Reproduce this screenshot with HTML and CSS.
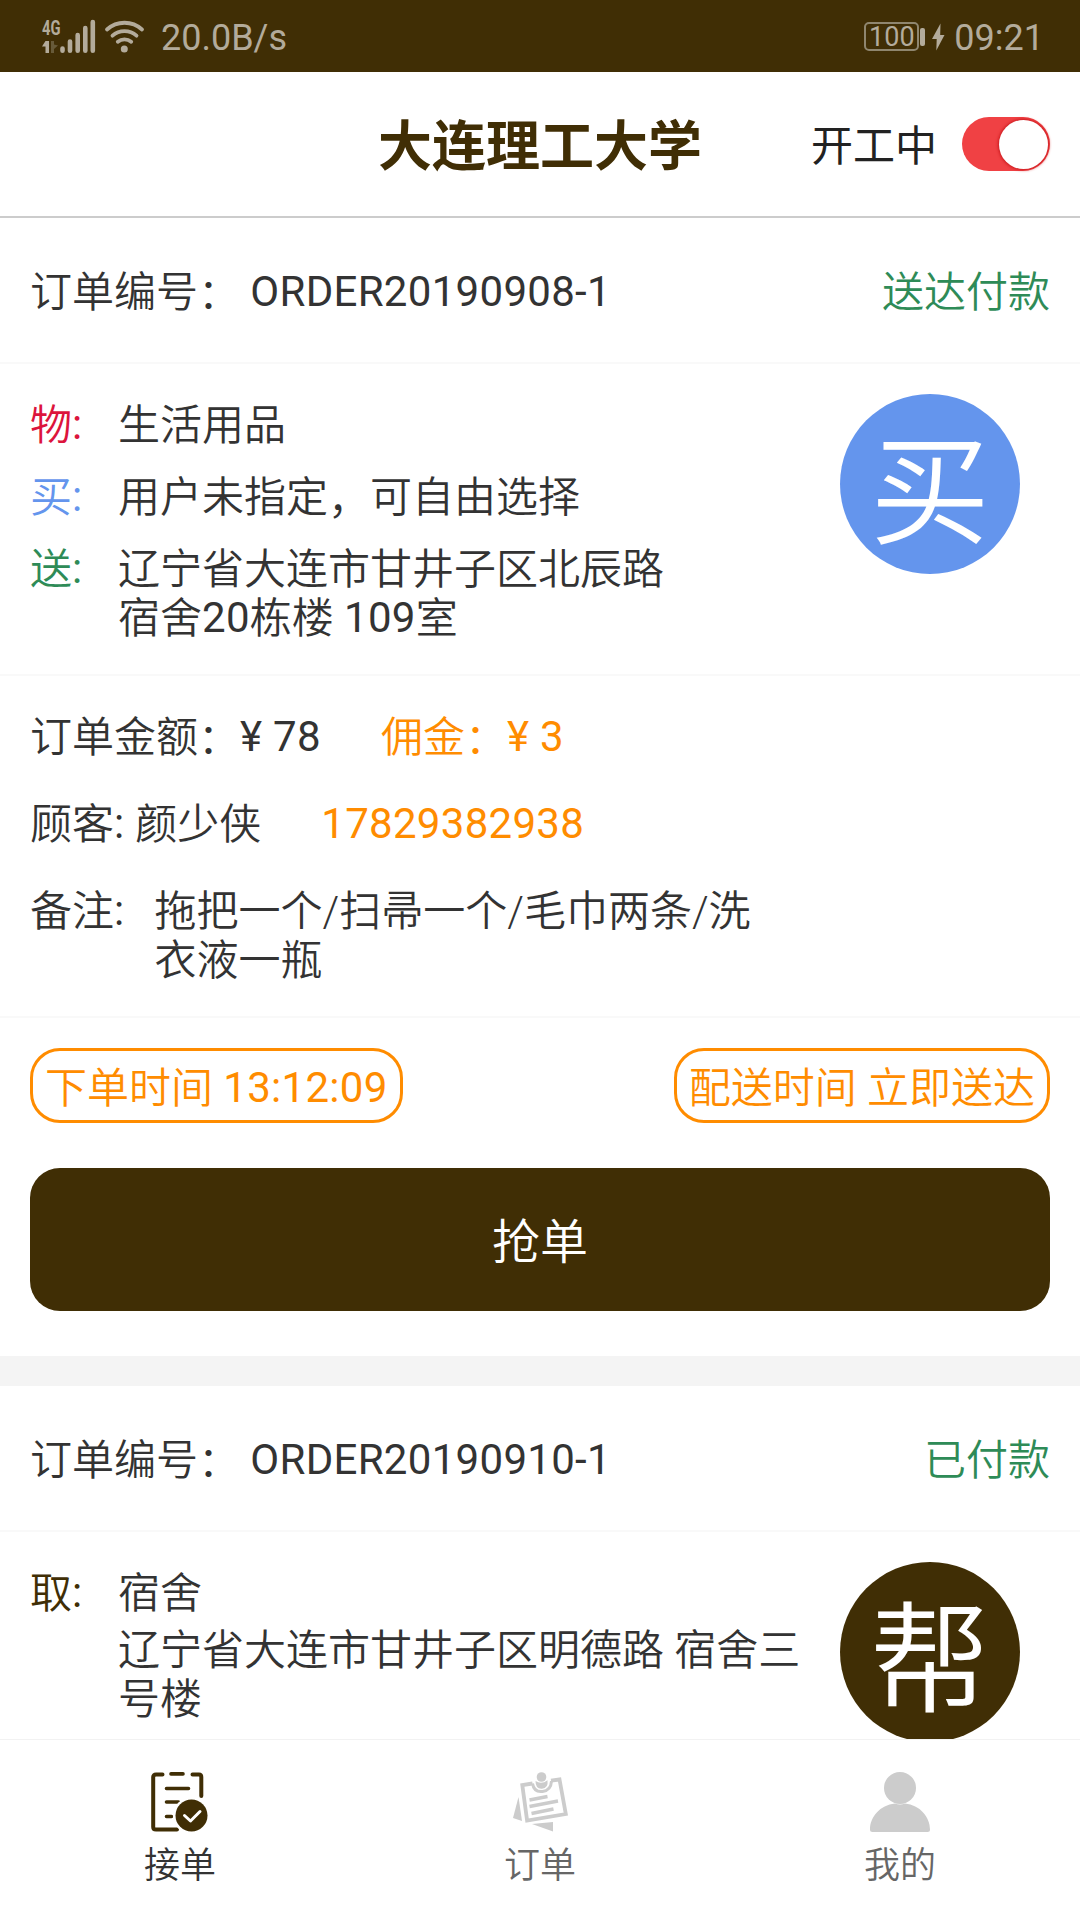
FILE: index.html
```html
<!DOCTYPE html>
<html lang="zh-CN">
<head>
<meta charset="utf-8">
<title>大连理工大学</title>
<link rel="stylesheet" href="styles.css">
</head>
<body>
<div class="app">
  <div class="status-bar">
    <svg class="signal" width="115" height="52" viewBox="-2 -6 115 52" fill="#b3ab9b" stroke="none">
      <text class="net-type" x="0" y="16.500" textLength="18.500" lengthAdjust="spacingAndGlyphs">4G</text>
      <path d="M3.500 23h3.500v12H3.500v-6.500H0z"/>
      <path opacity=".35" d="M9 23v12h3v-4l4-3.500-4-1v-3.500z"/>
      <g stroke="#b3ab9b" stroke-width="4.600" stroke-linecap="round" fill="none">
        <path d="M20.500 30.500v2.200M28 23.500v9.200M35.700 17v15.700M43.300 10v22.700M50.800 4v28.700"/>
      </g>
      <g stroke="#b3ab9b" stroke-width="3.800" stroke-linecap="round" fill="none">
        <path d="M65 11.500a26 26 0 0 1 35 0M70.500 17.700a18 18 0 0 1 24 0M75.800 23.800a10.500 10.500 0 0 1 13.400 0"/>
      </g>
      <circle cx="82.300" cy="31" r="3.500"/>
    </svg>
    <span class="speed">20.0B/s</span>
    <span class="battery">100</span>
    <svg class="charge" width="26" height="30" viewBox="0 0 26 30" fill="#b3ab9b">
      <rect x="1" y="6" width="5" height="18" rx="2"/>
      <path d="M21.500 1.500L13 17h4.700L17.300 28.500 25.500 13h-4.300z"/>
    </svg>
    <span class="clock">09:21</span>
  </div>

  <header class="header">
    <h1 class="title">大连理工大学</h1>
    <div class="work">
      <span class="work-label">开工中</span>
      <span class="switch"><span class="knob"></span></span>
    </div>
  </header>

  <main class="orders">
    <section class="card">
      <div class="card-head">
        <span>订单编号<span class="colon">：</span> <span class="latin">ORDER20190908-1</span></span>
        <span class="paid">送达付款</span>
      </div>
      <div class="goods">
        <div class="places">
          <div class="place"><span class="tag red">物<span class="latin">:</span></span><div class="where">生活用品</div></div>
          <div class="place"><span class="tag blue">买<span class="latin">:</span></span><div class="where">用户未指定<span class="colon">，</span>可自由选择</div></div>
          <div class="place"><span class="tag green">送<span class="latin">:</span></span><div class="where">辽宁省大连市甘井子区北辰路<br>宿舍<span class="latin">20</span>栋楼 <span class="latin">109</span>室</div></div>
        </div>
        <div class="kind buy">买</div>
      </div>
      <div class="detail">
        <div class="line"><span>订单金额<span class="colon">：</span><span class="latin">¥ 78</span></span><span class="orange">佣金<span class="colon">：</span><span class="latin">¥ 3</span></span></div>
        <div class="line"><span>顾客<span class="latin">: </span>颜少侠</span><span class="orange latin phone">17829382938</span></div>
        <div class="line note"><span>备注<span class="latin">:</span></span><span class="note-text">拖把一个/扫帚一个/毛巾两条/洗衣液一瓶</span></div>
      </div>
      <div class="actions">
        <div class="times">
          <span class="pill">下单时间 <span class="latin">13:12:09</span></span>
          <span class="pill">配送时间 立即送达</span>
        </div>
        <button class="grab">抢单</button>
      </div>
    </section>

    <section class="card">
      <div class="card-head">
        <span>订单编号<span class="colon">：</span> <span class="latin">ORDER20190910-1</span></span>
        <span class="paid">已付款</span>
      </div>
      <div class="goods">
        <div class="places">
          <div class="place"><span class="tag brown">取<span class="latin">:</span></span><div class="where"><div class="name">宿舍</div>辽宁省大连市甘井子区明德路 宿舍三号楼</div></div>
        </div>
        <div class="kind help">帮</div>
      </div>
    </section>
  </main>

  <nav class="tabs">
    <a class="tab active">
      <svg width="60" height="60" viewBox="0 0 60 60" fill="none" stroke="#402e05" stroke-width="4" stroke-linecap="round" stroke-linejoin="round">
        <path d="M12.500 2.500H6Q3.200 2.500 3.200 5V55Q3.200 57.500 6 57.500H27"/>
        <path d="M42.500 2.500H49Q51.300 2.500 51.300 5V24"/>
        <path d="M21 1.900h12M16.500 16.500h22M16.500 30h12M16.500 44.500h5" stroke-width="3.600"/>
        <circle cx="41.500" cy="43.500" r="18.500" fill="#fff" stroke="none"/>
        <circle cx="41.500" cy="43.500" r="16" fill="#402e05" stroke="none"/>
        <path d="M34.500 43.500l6 5.500 9.500-9.500" stroke="#fff" stroke-width="3"/>
      </svg>
      <span>接单</span>
    </a>
    <a class="tab">
      <svg width="60" height="60" viewBox="0 0 60 60" fill="#ccc">
        <path d="M8.500 25L3 46l9 3z"/>
        <path d="M22 52l21-2V59.500z"/>
        <g fill="none" stroke="#ccc">
          <path d="M22.500 11.500L12.300 13l4.800 35.500 38.700-6.500-6.300-34.500-8.500 1.200" stroke-width="3.800"/>
          <path d="M22.500 11.500q1.500 9 10 8t9-10.500" stroke-width="3"/>
          <path d="M19.500 28l18-3.500M19.500 34.500l28.500-5.500M21.500 41.500l22-4.500" stroke-width="3.400"/>
        </g>
        <circle cx="31.500" cy="5" r="4.800"/>
        <path d="M25.500 9q6 4 12-.8 1 8-5.500 8.500t-6.500-7.700z"/>
      </svg>
      <span>订单</span>
    </a>
    <a class="tab">
      <svg width="60" height="60" viewBox="0 0 60 60" fill="#ccc">
        <circle cx="30" cy="16" r="16"/>
        <path d="M25 31.500Q30 33.500 35 31.500C50 33 60 45 60 57.500Q60 60 57.500 60H2.500Q0 60 0 57.500C0 45 10 33 25 31.500z"/>
      </svg>
      <span>我的</span>
    </a>
  </nav>
</div>
</body>
</html>
```
FILE: styles.css
```css
* { box-sizing: border-box; }

body {
  margin: 0;
  background: #fff;
  color: #333;
  font: 350 42px/49px Roboto, "Noto Sans CJK SC", sans-serif;
}

.latin {
  font-weight: 400;
  line-height: 40px;
  letter-spacing: 0.3px;
  vertical-align: 1px;
}
.phone { line-height: 47px; }
.colon {
  line-height: 40px;
  vertical-align: -2px;
}

.app {
  display: flex;
  flex-direction: column;
  width: 1080px;
  height: 1920px;
  overflow: hidden;
}

.status-bar {
  flex: none;
  display: flex;
  align-items: center;
  height: 72px;
  padding: 5px 36px 0 40px;
  background: #402e05;
  color: #b3ab9b;
  font-size: 36px;
  font-weight: 400;
}
.signal { margin-top: -2px; }
.net-type { font: 700 21px Roboto, sans-serif; }
.speed { margin-left: 6px; }
.battery {
  margin: -4px 0 0 auto;
  width: 55px;
  height: 29px;
  border: 2px solid #8f866f;
  border-radius: 5px;
  font-size: 27px;
  line-height: 26px;
  text-align: center;
}
.charge { margin: -4px 9px 0 0; }

.header {
  flex: none;
  display: grid;
  grid-template-columns: 1fr auto 1fr;
  align-items: center;
  height: 146px;
  padding: 0 30px;
  border-bottom: 2px solid #ccc;
}
.title {
  grid-column: 2;
  margin: 0;
  padding-top: 8px;
  color: #402e05;
  font-size: 54px;
  font-weight: 700;
  line-height: 64px;
}
.work {
  display: flex;
  align-items: center;
  justify-content: flex-end;
  gap: 25px;
  color: #222;
  font-weight: 400;
}
.work-label { padding-top: 4px; }
.switch {
  display: flex;
  justify-content: flex-end;
  width: 88px;
  height: 54px;
  padding: 2.5px;
  border-radius: 27px;
  background: #f04144;
}
.knob {
  width: 49px;
  height: 49px;
  border-radius: 50%;
  background: #fff;
  box-shadow: 0 0 3px 1px #c9181c;
}

.orders { flex: 1; min-height: 0; overflow: hidden; }
.card { border-bottom: 30px solid #f4f4f4; }
.card-head {
  display: flex;
  align-items: center;
  justify-content: space-between;
  height: 146px;
  padding: 4px 30px 0;
  border-bottom: 2px solid #f9f9f9;
}
.paid, .green { color: #2e8b57; }
.red { color: #dc143c; }
.blue { color: #6495ed; }
.brown { color: #402e05; }
.orange { color: #ff8c00; }

.goods {
  display: flex;
  justify-content: space-between;
  height: 312px;
  padding: 30px 60px 0 30px;
  border-bottom: 2px solid #f9f9f9;
}
.places { display: flex; flex-direction: column; gap: 23px; padding-top: 7px; }
.place { display: flex; }
.tag { width: 88px; }
.where { width: 690px; }
.name { margin-bottom: 8px; }
.kind {
  flex: none;
  width: 180px;
  height: 180px;
  padding-top: 10px;
  border-radius: 50%;
  color: #fff;
  font-size: 120px;
  line-height: 180px;
  text-align: center;
}
.buy { background: #6495ed; }
.help { background: #402e05; }

.detail {
  display: flex;
  flex-direction: column;
  gap: 38px;
  height: 342px;
  padding: 37px 30px 0;
  border-bottom: 2px solid #f9f9f9;
}
.line { display: flex; gap: 60px; }
.note { gap: 30px; }
.note-text { width: 610px; }

.actions { padding: 30px 30px 45px; }
.times { display: flex; justify-content: space-between; margin-bottom: 45px; }
.pill {
  height: 75px;
  padding: 13px 12px 0;
  border: 3px solid #ff8c00;
  border-radius: 30px;
  color: #ff8c00;
}
.grab {
  display: block;
  width: 100%;
  height: 143px;
  padding: 5px 0 0;
  border: 0;
  border-radius: 30px;
  background: #402e05;
  color: #fff;
  font: inherit;
  font-size: 48px;
}

.tabs {
  flex: none;
  display: flex;
  height: 181px;
  border-top: 1px solid #f2f2f2;
  background: #fff;
}
.tab {
  flex: 1;
  display: flex;
  flex-direction: column;
  align-items: center;
  gap: 13px;
  padding-top: 32px;
  color: #666;
  font-size: 36px;
  line-height: 42px;
}
.active { color: #333; }
```
